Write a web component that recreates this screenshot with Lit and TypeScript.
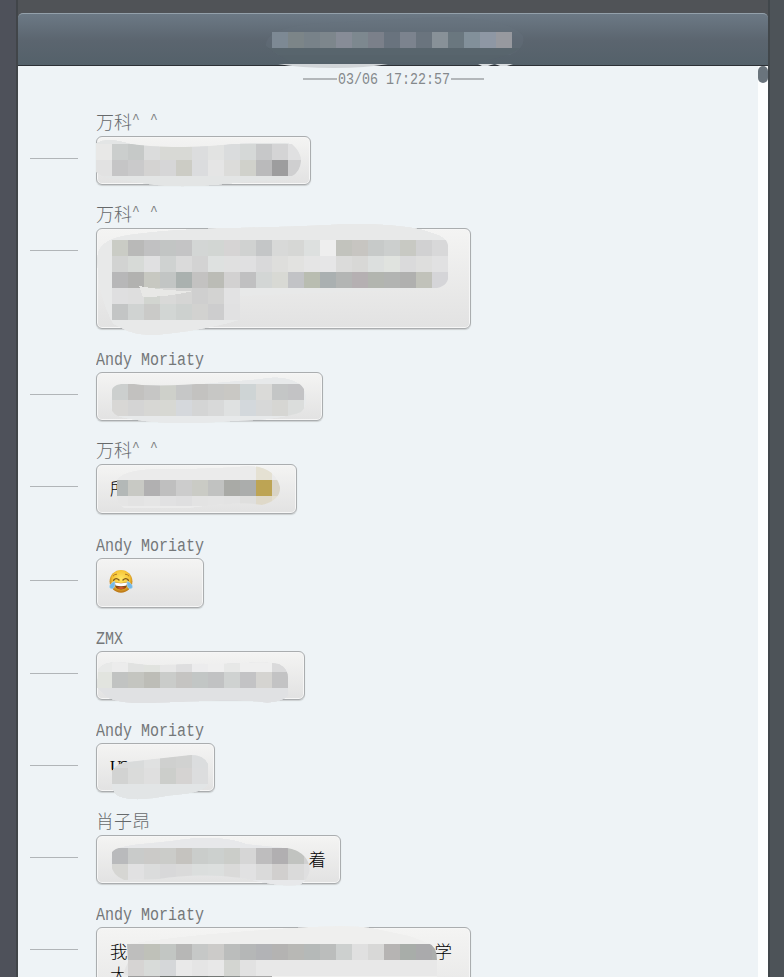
import { LitElement, html, svg, css, nothing } from "lit";
import { customElement, property } from "lit/decorators.js";

interface CellRow {
  x: number;
  y: number;
  h?: number;
  colors: string;
}

interface Mosaic {
  outline: string;
  wash: string;
  rows: CellRow[];
  extra?: { d: string; fill: string }[];
}

interface Message {
  id: string;
  name: string;
  width: number;
  height: number;
  top: number;
  lines?: [string, string][];
  endPad?: number;
  emoji?: boolean;
  mosaic?: Mosaic;
}

const CELL = 16;

const messages: Message[] = [
  {
    id: "m1", name: "万科^ ^", width: 215, height: 49, top: 136,
    mosaic: {
      outline: "M96 143C104 138 116 139 132 144C156 148 200 148 232 144C262 142 284 142 292 144Q301 152 301 161Q300 172 292 176L288 180C262 181 240 182 228 184C190 188 160 187 140 183C120 179 104 180 96 172Z",
      wash: "#e3e5e5",
      rows: [
        { x: 96, y: 144, colors: "e8e8e7 cbcecd c6c9c8 dbdcdc d8d9d5 d8d9d5 dcddde e2e3e2 dadcdd d5d8d7 c7c8c9 d4d4d5 e0e0e1" },
        { x: 96, y: 160, colors: "e2e2e2 c5c5c6 cacacb d4d3d2 d6d6d7 ccccc5 dbdcde e5e5e5 dcdcda d0d1cb bababb 9d9d9e cfcfd0" },
      ],
    },
  },
  {
    id: "m2", name: "万科^ ^", width: 375, height: 101, top: 228,
    mosaic: {
      outline: "M97 262C96 244 108 236 142 233C190 227 260 228 320 225C370 222 412 225 430 232C446 236 449 242 448 250L448 279Q446 288 430 289L240 296L240 320C220 326 190 332 168 334C146 337 132 334 123 329L113 324C103 306 98 286 97 262Z",
      wash: "#e8e9e9",
      rows: [
        { x: 112, y: 240, colors: "caccc5 b9b9b8 c1c1c2 c2c5c4 c4c4c5 d3d6d5 d2d6d3 d6d4d4 d0d2d1 c4c6c7 d8d9d8 d6d7d5 dde0df eeeeee c2c3bd c7c5c1 c7cac9 cccfce c8c9c3 d1d1d2 d8d8d9" },
        { x: 112, y: 256, colors: "d2d3d2 d7dad7 e0e0e1 cfd2d1 dadada d3d3d3 dee1e0 e0e0e0 e0e0e1 d9d9da dededc e2e2e0 e5e5e5 e6e6e7 dbdbda d8d8d6 dcdfde e0e3df dadadb dededd e1e1e2" },
        { x: 112, y: 272, colors: "b7b7b8 b2b2b0 c7c8c1 c2c5c4 aab1af c3c2c1 bbbcb6 d2d1d1 c0c0c1 d3d6d5 d8d9d4 c2c3c6 b9bdb1 aab0b1 b3b5b4 b5b0b2 b2b5af b2b4b2 b0b0af c1c2ba d5d5d8" },
        { x: 112, y: 288, colors: "dfdfe0 dedede d2d5d0 d9d9d8 d5d5d4 cfcfcf d3d3d2 e2e2e3" },
        { x: 112, y: 304, colors: "c3c5c5 d0d3d2 cacac8 d2d6d4 cdd1cf d2d2d0 cdcdce e1e1e2" },
      ],
      extra: [{ d: "M139 286Q165 291 193 291Q169 297 143 297Z", fill: "#e8e8e6" }],
    },
  },
  {
    id: "m3", name: "Andy Moriaty", width: 227, height: 49, top: 372,
    mosaic: {
      outline: "M112 390C114 383 126 383 142 385C180 387 222 382 260 379C282 374 303 381 305 392Q309 405 301 412C286 418 260 421 238 421C190 425 150 424 124 418Q112 416 111 407Z",
      wash: "#e7e9ea",
      rows: [
        { x: 112, y: 384, colors: "cccfce c2c1bf c6c6c5 ced0ca c6c7c7 c3c2c0 c7c7c5 c9c8c4 ced4d5 dadad8 c4c6c6 c3c3c5" },
        { x: 112, y: 400, colors: "d8d7d5 d4d4d4 d7d7d4 d7d8d3 d5d8dc d4d5d5 d8d9d9 dfe1e1 d3d8dc d7d8d8 d6d6d3 dbdddc" },
      ],
    },
  },
  {
    id: "m4", name: "万科^ ^", width: 201, height: 50, top: 464, lines: [["所", ""]],
    mosaic: {
      outline: "M117 480C124 469 150 468 184 469L236 467C260 463 276 470 280 487Q281 500 262 505Q244 501 190 508H124Q118 504 117 496Z",
      wash: "#ebebeb",
      rows: [
        { x: 112, y: 496, h: 10, colors: "e5e5e5 e3e3e3 e5e5e5 e1e1e2 dfdfe0 e3e3e3 e4e4e4 e3e3e3 dfdfde dfd9c9 e4e0d3" },
        { x: 112, y: 480, colors: "b3b8b7 c8c9c4 b1b0b1 bfbfbf cccccc cacbc5 c1c2c1 a9aaa6 abadac bda454 d9d4c7" },
      ],
      extra: [{ d: "M256 464H272V480H256Z", fill: "#e5e1d3" }],
    },
  },
  { id: "m5", name: "Andy Moriaty", width: 108, height: 50, top: 558, emoji: true },
  {
    id: "m6", name: "ZMX", width: 209, height: 49, top: 651,
    mosaic: {
      outline: "M98 670C104 660 118 661 138 664C160 667 184 663 207 664C240 664 262 660 279 664Q289 669 288 680V696Q282 702 267 703C234 698 190 703 142 703Q120 704 108 698L97 688Z",
      wash: "#e0e1e3",
      rows: [
        { x: 96, y: 656, colors: "e8e9e8 ececec e1e2e1 e1e3df e7e7e7 dededf ececed efefef e7e8e7 efefef efefef dadadb" },
        { x: 96, y: 672, colors: "e2e4df c1c3c2 c4c5c0 bdbdb7 caccca c5c4c2 c2c6c5 c1c2c3 cfd2d1 c3c3c5 d5d4d1 c3c3c4" },
      ],
    },
  },
  {
    id: "m7", name: "Andy Moriaty", width: 119, height: 49, top: 743, lines: [["US", ""]],
    mosaic: {
      outline: "M112 771Q117 763 128 762L191 755Q204 755 208 764V784C205 792 190 794 168 796C144 801 122 801 115 794Q110 787 112 780Z",
      wash: "#e2e5e6",
      rows: [
        { x: 112, y: 752, colors: "d8dada d9dbdb e0e1e1 cfd0cf d1d2d1 dbddde" },
        { x: 112, y: 768, colors: "d2d3d2 dadbda dfdfdf cccecb d5d3d2 dcddde" },
      ],
    },
  },
  {
    id: "m8", name: "肖子昂", width: 245, height: 49, top: 835, lines: [["", "着"]], endPad: 14,
    mosaic: {
      outline: "M112 852C120 843 152 844 184 839C210 836 232 838 247 844L287 848C302 850 312 861 309 873Q306 882 300 885C281 888 260 882 242 878C210 874 182 875 159 879L124 880Q112 875 111 864Z",
      wash: "#e7e8ea",
      rows: [
        { x: 112, y: 848, colors: "b9babc c9cbca cbcac8 cbccc9 c5c3bf cacdcb ccd0ce cbcdc9 d6d6d6 bebdbe b1afb1 c1c3c0 d1d1d1" },
        { x: 112, y: 864, colors: "d6d6d3 e1e1e2 dbdcdc d8d8d9 dadada dbdedd dcdfde dadad9 e1e1e2 dadada d1cfce dadada dfdfe0" },
      ],
    },
  },
  {
    id: "m9", name: "Andy Moriaty", width: 375, height: 98, top: 927, lines: [["我", "学"], ["大", ""]], endPad: 18,
    mosaic: {
      outline: "M127 944C180 936 230 932 290 928Q350 924 372 928L410 936L428 943Q437 946 437 960V1008H127V975L123 974L128 962Z",
      wash: "#efefee",
      rows: [
        { x: 112, y: 944, colors: "bebebe bebebd bfc1b9 c2c6c3 b7b7b6 c6c8c7 cccbc9 bbbdbc b5b7b7 b2b3b6 b4b3b2 b8b8b5 b5b9b8 bbbdbc cdd0cf e0e0e0 d8d8d7 b6b4b3 a8ada9 aaaaac acaead" },
        { x: 112, y: 960, colors: "e4e4e4 d6d4d3 d8dbd9 d5d7d9 e9e9e9 e5e5e5 e8e8e8 d3d5d1 e2e2e2 e8e8e8 e8e8e8 e8e8e8 e8e8e8 e8e8e8 e8e8e8 e8e8e8 e8e8e8 e8e8e8 e8e8e8 e8e8e8 e8e8e8" },
        { x: 128, y: 976, colors: "9c9c9c 9c9c9c 6c706f 6c706f 6c706f 747876 8c908e a6a6a6 a6a6a6" },
      ],
    },
  },
];

const drawRow = (row: CellRow) =>
  row.colors.split(" ").map(
    (c, i) => svg`<rect x=${row.x + i * CELL} y=${row.y} width=${CELL} height=${row.h ?? CELL} fill=${"#" + c}></rect>`
  );

@customElement("chat-emoji")
class ChatEmoji extends LitElement {
  static styles = css`
    :host { display: block; width: 24px; height: 25px; }
    svg { display: block; }
  `;
  render() {
    return html`<svg width="24" height="25" viewBox="0 0 24 25">
      <defs>
        <radialGradient id="face" cx="50%" cy="40%" r="56%">
          <stop offset="0" stop-color="#ffe766"></stop>
          <stop offset=".65" stop-color="#f7c637"></stop>
          <stop offset="1" stop-color="#bf7b19"></stop>
        </radialGradient>
      </defs>
      <circle cx="12" cy="12.3" r="11.4" fill="url(#face)"></circle>
      <path d="M4 7.2Q5.5 5 8 5.2M16 5.2Q18.5 5 20 7.2" stroke="#b17a20" stroke-width="1" fill="none"></path>
      <path d="M4.6 11.2Q7.2 8.2 10 11M14 11Q16.8 8.2 19.4 11.2" stroke="#805a1c" stroke-width="1.4" fill="none" stroke-linecap="round"></path>
      <path d="M5 13.2Q12 14.6 19 13.2Q18.4 20.2 12 20.4Q5.6 20.2 5 13.2Z" fill="#8a4712"></path>
      <path d="M5.8 13.6Q12 14.8 18.2 13.6L17.5 16.6Q12 17.8 6.5 16.6Z" fill="#fff"></path>
      <path d="M8 19Q12 16.8 16 19Q12 21.2 8 19Z" fill="#d8572e"></path>
      <path d="M5.7 12.2Q6.7 17 4.4 19.3Q2 20.6.6 18.5Q-.2 15.2 5.7 12.2Z" fill="#73b9ea" stroke="#b8dff5" stroke-width=".5"></path>
      <path d="M18.3 12.2Q17.3 17 19.6 19.3Q22 20.6 23.4 18.5Q24.2 15.2 18.3 12.2Z" fill="#73b9ea" stroke="#b8dff5" stroke-width=".5"></path>
    </svg>`;
  }
}

@customElement("chat-message")
class ChatMessage extends LitElement {
  @property({ attribute: false }) message!: Message;

  static styles = css`
    :host {
      display: grid;
      grid-template-columns: 48px 1fr;
      column-gap: 18px;
      padding-left: 12px;
    }
    .name {
      grid-column: 2;
      height: 24px;
      line-height: 25px;
      color: #66696b;
      font-size: 18px;
      font-weight: 300;
      white-space: pre;
    }
    .name.latin {
      line-height: 24px;
      transform: scaleX(0.8333);
      transform-origin: 0 0;
      color: #747779;
    }
    .hats {
      display: inline-block;
      line-height: 10px;
      font-size: 13px;
      letter-spacing: 1.2px;
      vertical-align: 6px;
      color: #7a7d80;
    }
    .dash { height: 1px; margin-top: 22px; background: #b1b5b8; }
    .bubble {
      box-sizing: border-box;
      position: relative;
      border: 1px solid #aaadaf;
      border-radius: 6px;
      background: linear-gradient(#f4f4f3, #e2e2e2);
      box-shadow: inset 0 0 0 1px #f6f6f6, 0 1px 1px #ccd0d2;
      padding: 12px 0 0 13px;
      color: #000;
      font-family: "Liberation Serif", "Noto Sans CJK SC", serif;
      font-size: 17.5px;
      font-weight: 300;
    }
    .line { display: flex; justify-content: space-between; height: 23px; line-height: 24px; }
    .latin-text { font-size: 16px; line-height: 22px; letter-spacing: -2px; }
    .cover { position: absolute; left: -1px; top: -1px; overflow: visible; display: block; }
    chat-emoji { margin: -2px 0 0 -1px; }
  `;

  render() {
    const m = this.message;
    const hat = m.name.endsWith("^ ^");
    const latin = /^[A-Z]/.test(m.name);
    return html`
      <div class="name ${latin ? "latin" : ""}">${hat ? html`万科<span class="hats">^ ^</span>` : m.name}</div>
      <div class="dash"></div>
      <div class="bubble" style="width:${m.width}px;height:${m.height}px;padding-right:${m.endPad ?? 13}px">
        ${m.emoji ? html`<chat-emoji></chat-emoji>` : nothing}
        ${m.lines?.map(([a, b]) => html`<div class="line"><span class=${/^[A-Z]/.test(a) ? "latin-text" : ""}>${a}</span><span>${b}</span></div>`)}
        ${m.mosaic
          ? html`<svg class="cover" width=${m.width} height=${m.height} viewBox="96 ${m.top} ${m.width} ${m.height}">
              <defs><clipPath id="shape"><path d=${m.mosaic.outline}></path></clipPath></defs>
              <g clip-path="url(#shape)" shape-rendering="crispEdges">
                <path d=${m.mosaic.outline} fill=${m.mosaic.wash}></path>
                ${m.mosaic.rows.map(drawRow)}
                ${m.mosaic.extra?.map((e) => svg`<path d=${e.d} fill=${e.fill}></path>`)}
              </g>
            </svg>`
          : nothing}
      </div>
    `;
  }
}

@customElement("app-root")
class AppRoot extends LitElement {
  static styles = css`
    :host {
      display: block;
      box-sizing: border-box;
      height: 977px;
      overflow: hidden;
      padding: 13px 16px 0 18px;
      background: linear-gradient(90deg, #4e515a 0 16px, #414549 16px 18px, transparent 18px 768px, #41474b 768px 770px, #4d5358 770px), #505357;
      font-family: "Liberation Mono", "Noto Sans CJK SC", monospace;
    }
    .window {
      height: 964px;
      display: flex;
      flex-direction: column;
      overflow: hidden;
    }
    .header {
      flex: none;
      box-sizing: border-box;
      height: 53px;
      position: relative;
      border-top: 1px solid #94a1ab;
      border-bottom: 1px solid #2c3035;
      border-radius: 5px 5px 0 0;
      background: linear-gradient(#6c7985, #5b656f 52%, #54616a);
    }
    .title { position: absolute; left: 254px; top: 18px; overflow: visible; display: block; }
    .body { flex: 1; min-height: 0; display: flex; background: #eef3f6; }
    .list { flex: 1; overflow: hidden; }
    .time {
      display: flex;
      align-items: center;
      gap: 1px;
      height: 26px;
      padding-left: 285px;
      margin-bottom: 20px;
      box-sizing: border-box;
      color: #85898c;
    }
    .stamp { width: 112px; font-size: 16px; white-space: pre; padding-top: 2px; }
    .stamp span { display: inline-block; transform: scaleX(0.8333); transform-origin: 0 0; }
    .rule { width: 33px; height: 2px; background: #b3b7ba; }
    .rule:first-child { width: 34px; }
    .track { flex: none; width: 10px; background: #fdfefe; }
    .thumb { height: 17px; border-radius: 5px; background: #6a747c; }
  `;

  /* Vertical space between one bubble and the next sender name. */
  private gapAfter(i: number): number {
    const next = messages[i + 1];
    return next ? next.top - messages[i].top - messages[i].height - 24 : 0;
  }

  render() {
    const title = "7d8994 7c8588 788289 7d868c 878c97 7d888f 7b808a 69737e 7c838e 6a747e 889198 6a777f 82909a 8e97a4 97999f";
    return html`
      <div class="window">
        <div class="header">
          <svg class="title" width="240" height="16" viewBox="272 32 240 16">
            <path d="M266 46Q264 30 310 24L440 17Q510 18 523 36Q526 48 510 55H278Z" fill="#66747f" opacity=".35"></path>
            <path d="M268 48H520Q510 58 470 62H290Z" fill="#57646b" opacity=".7"></path>
            <path d="M278 64H388Q366 68 334 68Q300 68 278 64Z" fill="#d1d5d8"></path>
            <path d="M478 64H494L488 66H482ZM495 64H513L507 66H500Z" fill="#d8dcdf"></path>
            <g shape-rendering="crispEdges">${drawRow({ x: 272, y: 32, colors: title })}</g>
          </svg>
        </div>
        <div class="body">
          <div class="list">
            <div class="time"><div class="rule"></div><div class="stamp"><span>03/06 17:22:57</span></div><div class="rule"></div></div>
            ${messages.map((m, i) => html`<chat-message .message=${m} style="margin-bottom:${this.gapAfter(i)}px"></chat-message>`)}
          </div>
          <div class="track"><div class="thumb"></div></div>
        </div>
      </div>
    `;
  }
}
